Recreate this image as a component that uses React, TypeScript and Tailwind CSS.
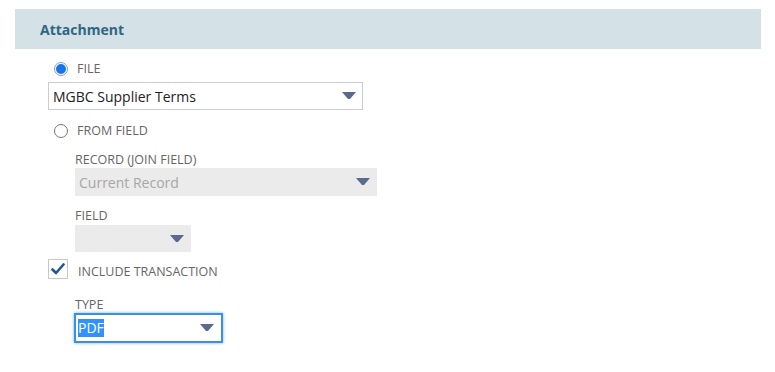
import React from 'react';

const Arrow: React.FC = () => (
  <svg width="14" height="8" viewBox="0 0 14 8" className="shrink-0">
    <path d="M0 0 H14 L8 7 H6 Z" fill="#5a6a8c" />
  </svg>
);

const Label: React.FC<{ children: React.ReactNode }> = ({ children }) => (
  <div className="text-[12.5px] leading-[14px] text-[#666666] uppercase">{children}</div>
);

export default function App() {
  return (
    <div className="w-[775px] h-[372px] bg-white pt-[9px] pl-[15px] pr-[14px] font-['Open_Sans',sans-serif]">
      <div className="h-[40px] bg-[#d4e2e8] flex items-center pl-[25px]">
        <span className="text-[14px] font-bold text-[#2f6680]">Attachment</span>
      </div>

      <div className="pl-[33px] pt-[13px]">
        {/* FILE */}
        <div className="flex items-center h-[14px] pl-[6px]">
          <span className="w-[14px] h-[14px] rounded-full border border-[#7aa3d6] bg-white flex items-center justify-center">
            <span className="w-[10px] h-[10px] rounded-full bg-[#1a73e8]" />
          </span>
          <span className="ml-[9px] text-[12.5px] text-[#666666]">FILE</span>
        </div>
        <div className="mt-[6px] w-[315px] h-[28px] border border-[#cccccc] flex items-center justify-between pl-[4px] pr-[6px]">
          <span className="text-[14px] text-[#222222]">MGBC Supplier Terms</span>
          <Arrow />
        </div>

        {/* FROM FIELD */}
        <div className="mt-[14px] flex items-center h-[14px] pl-[6px]">
          <span className="w-[14px] h-[14px] rounded-full border border-[#767676] bg-white" />
          <span className="ml-[9px] text-[12.5px] text-[#666666]">FROM FIELD</span>
        </div>

        <div className="pl-[27px]">
          <div className="mt-[15px]">
            <Label>RECORD (JOIN FIELD)</Label>
          </div>
          <div className="mt-[1px] w-[302px] h-[28px] bg-[#ebebeb] flex items-center justify-between pl-[4px] pr-[7px]">
            <span className="text-[14px] text-[#a6a6a6]">Current Record</span>
            <Arrow />
          </div>

          <div className="mt-[13px]">
            <Label>FIELD</Label>
          </div>
          <div className="mt-[2px] w-[116px] h-[27px] bg-[#ebebeb] flex items-center justify-end pr-[7px]">
            <Arrow />
          </div>
        </div>

        {/* INCLUDE TRANSACTION */}
        <div className="mt-[7px] flex items-start h-[20px]">
          <span className="w-[20px] h-[20px] border border-[#c8c8c8] bg-white flex items-center justify-center">
            <svg width="14" height="12" viewBox="0 0 14 12">
              <path d="M1.5 6.5 L5 10 L12.5 1.5" fill="none" stroke="#245595" strokeWidth="2.6" strokeLinecap="round" strokeLinejoin="round" />
            </svg>
          </span>
          <span className="ml-[10px] mt-[6px] leading-[14px] text-[12.5px] text-[#666666]">INCLUDE TRANSACTION</span>
        </div>

        <div className="pl-[27px]">
          <div className="mt-[19px]">
            <Label>TYPE</Label>
          </div>
          <div className="mt-[1px] -ml-[1px] w-[149px] h-[30px] border-2 border-[#3d8fe0] shadow-[0_0_3px_#7ab4ef] bg-white flex items-center justify-between pl-[2px] pr-[7px]">
            <span className="text-[14px] text-white bg-[#3390ff] leading-[18px]">PDF</span>
            <Arrow />
          </div>
        </div>
      </div>
    </div>
  );
}
